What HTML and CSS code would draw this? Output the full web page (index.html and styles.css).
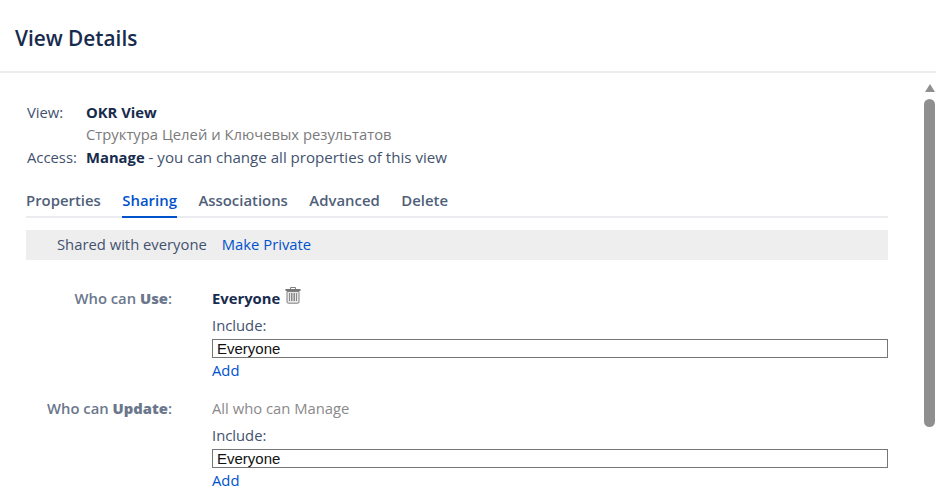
FILE: index.html
```html
<!DOCTYPE html>
<html lang="en-US">
  <head>
    <meta charset="utf-8" />
    <title>View Details</title>
    <link rel="stylesheet" href="styles.css">
  </head>
  <body>
    <header class="dialogHeader">
      <h1>View Details</h1>
    </header>

    <div class="dialogBody">
      <main class="content">
        <div class="summary">
          <span class="summaryLabel">View:</span>
          <span class="viewName">OKR View</span>
          <span></span>
          <span class="viewDesc">Структура Целей и Ключевых результатов</span>
          <span class="summaryLabel accessRow">Access:</span>
          <span class="accessRow accessText"><b>Manage</b> - you can change all properties of this view</span>
        </div>

        <nav class="tabs">
          <a class="tab">Properties</a>
          <a class="tab tabActive">Sharing</a>
          <a class="tab">Associations</a>
          <a class="tab">Advanced</a>
          <a class="tab">Delete</a>
        </nav>

        <div class="sharedBar">
          <span>Shared with everyone</span>
          <a class="link">Make Private</a>
        </div>

        <section class="shareRow">
          <div class="shareLabel">Who can <b>Use</b>:</div>
          <div class="shareValue">
            <div class="current">
              <b>Everyone</b>
              <svg class="trash" width="16" height="18" viewBox="0 0 16 18">
                <path d="M5.5 3V1.5h5V3" fill="none" stroke="#808080" stroke-width="1"/>
                <rect x="0.5" y="3" width="15" height="2" fill="#777"/>
                <path d="M2 5.5h12v10.5a1.2 1.2 0 0 1-1.2 1.2H3.2A1.2 1.2 0 0 1 2 16z" fill="#e8e8e8" stroke="#808080"/>
                <path d="M4.5 7v8M6.5 7v8M8 7v8M9.5 7v8M11.5 7v8" stroke="#8a8a8a" stroke-width="1"/>
              </svg>
            </div>
            <div class="includeLabel">Include:</div>
            <div class="includeBox">Everyone</div>
            <a class="link addLink">Add</a>
          </div>
        </section>

        <section class="shareRow">
          <div class="shareLabel">Who can <b>Update</b>:</div>
          <div class="shareValue">
            <div class="current currentMuted">All who can Manage</div>
            <div class="includeLabel">Include:</div>
            <div class="includeBox">Everyone</div>
            <a class="link addLink">Add</a>
          </div>
        </section>
      </main>

      <div class="scrollbar">
        <div class="scrollArrow"></div>
        <div class="scrollThumb"></div>
      </div>
    </div>
  </body>
</html>
```

FILE: styles.css
```css
html {
  font-family: "Open Sans", "Noto Sans", sans-serif;
  background-color: white;
}

body {
  margin: 0;
  height: 496px;
  overflow: hidden;
  font-size: 14.8px;
  line-height: 22px;
  color: #42526e;
}

.dialogHeader {
  height: 71px;
  border-bottom: 2px solid #ebecf0;
  display: flex;
  align-items: center;
  padding-left: 15px;
}

.dialogHeader h1 {
  margin: 5px 0 0;
  font-size: 20.8px;
  font-weight: 600;
  color: #172b4d;
}

.dialogBody {
  display: flex;
  justify-content: space-between;
  height: 423px;
}

.content {
  width: 862px;
  margin-left: 26px;
  padding-top: 28px;
}

.summary {
  display: grid;
  grid-template-columns: 59px 1fr;
  margin-left: 1px;
}

.summary b,
.viewName {
  font-weight: 700;
  color: #172b4d;
}

.viewDesc {
  color: #7a7a7a;
}

.accessRow {
  margin-top: 1px;
}

.accessText {
  font-size: 15.1px;
}

.accessText b {
  font-size: 14.8px;
}

.tabs {
  display: flex;
  gap: 21.5px;
  margin-top: 21px;
  border-bottom: 2px solid #ebecf0;
  height: 27px;
}

.tab {
  height: 27px;
  font-size: 14.9px;
  font-weight: 600;
  color: #505f79;
}

.tabActive {
  color: #0052cc;
  border-bottom: 2px solid #0052cc;
}

.sharedBar {
  display: flex;
  gap: 15px;
  margin-top: 12px;
  height: 28px;
  align-items: center;
  padding: 0 0 2px 31px;
  background-color: #eeeeee;
}

.link {
  color: #0052cc;
}

.addLink {
  display: block;
  margin-top: 1px;
}

.shareRow {
  display: flex;
  margin-top: 27px;
}

.shareRow + .shareRow {
  margin-top: 16px;
}

.shareLabel {
  width: 146px;
  text-align: right;
  font-weight: 600;
  color: #6b778c;
}

.shareValue {
  margin-left: 40px;
  flex: 1;
}

.current {
  height: 22px;
  display: flex;
  gap: 5px;
}

.current b {
  font-weight: 700;
  color: #172b4d;
}

.currentMuted {
  color: #8a8a8a;
}

.trash {
  margin-top: -1px;
}

.includeLabel {
  margin-top: 5px;
  margin-bottom: 3px;
}

.includeBox {
  height: 17px;
  line-height: 17px;
  border: 1px solid #767676;
  padding-left: 4px;
  font-family: "Liberation Sans", sans-serif;
  font-size: 15px;
  color: #111111;
}

.scrollbar {
  width: 11px;
  margin-right: 1px;
  padding-top: 11px;
}

.scrollArrow {
  width: 0;
  margin: 0 auto;
  border-left: 5px solid transparent;
  border-right: 5px solid transparent;
  border-bottom: 8px solid #8f8f8f;
}

.scrollThumb {
  margin-top: 7px;
  height: 328px;
  border-radius: 6px;
  background-color: #8f8f8f;
}
```
